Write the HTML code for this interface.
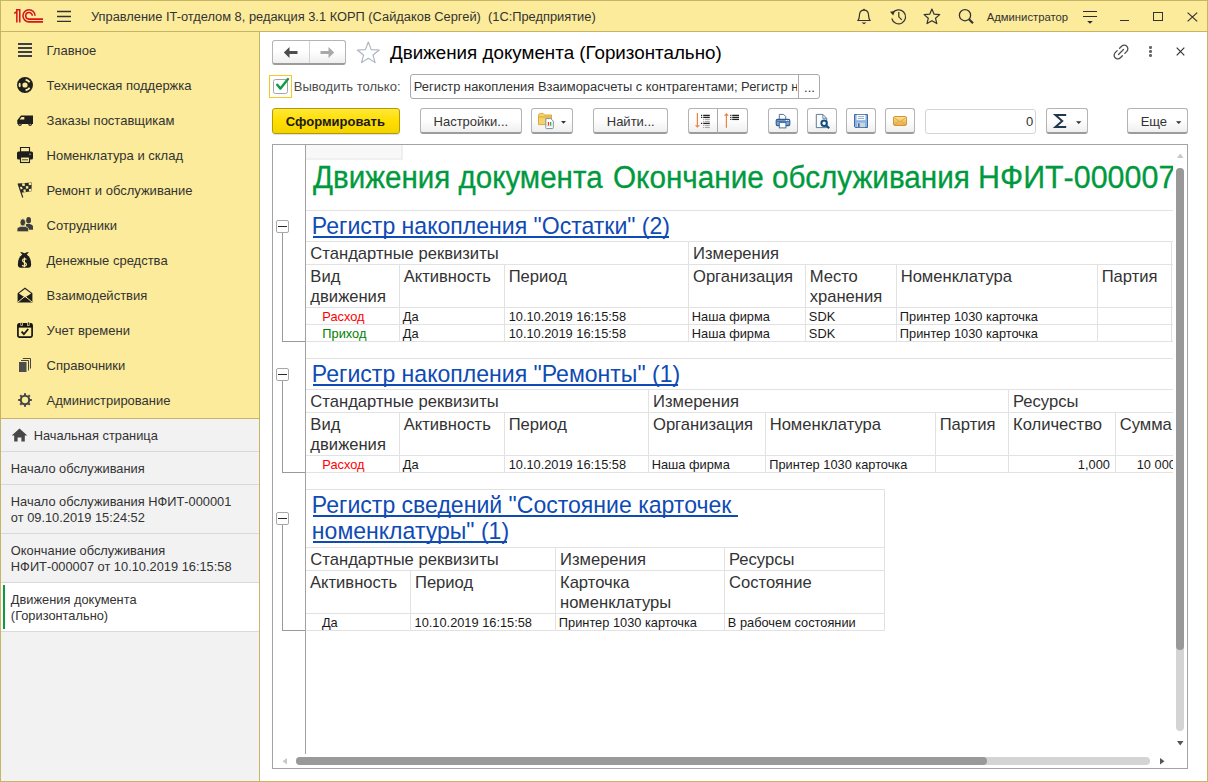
<!DOCTYPE html><html><head><meta charset="utf-8"><style>
html,body{margin:0;padding:0;width:1208px;height:782px;overflow:hidden;background:#fff}
.t{position:absolute;white-space:pre;font-family:"Liberation Sans", sans-serif}
svg{overflow:visible}
</style></head><body><div style="position:absolute;left:0px;top:0px;width:1208px;height:782px;background:#fff"></div>
<div style="position:absolute;left:0px;top:0px;width:1208px;height:32px;background:#fbeb9a"></div>
<div style="position:absolute;left:0px;top:0px;width:1208px;height:1px;background:#c5b565"></div>
<div style="position:absolute;left:0px;top:31px;width:1208px;height:1px;background:#c5b565"></div>
<div style="position:absolute;left:0px;top:0px;width:1px;height:782px;background:#c5b565"></div>
<div style="position:absolute;left:1207px;top:0px;width:1px;height:782px;background:#c5b565"></div>
<div style="position:absolute;left:0px;top:781px;width:1208px;height:1px;background:#c5b565"></div>
<svg style="position:absolute;left:13px;top:8px;" width="32" height="16" viewBox="0 0 32 16"><g fill="none" stroke="#d8141b" stroke-width="1.55">
<path d="M1.2 5.4 L3.85 3.6 M3.85 14.6 V1.8 H6.75 V14.6"/>
<path d="M22.05 7.8 A6.05 6.05 0 1 0 16 13.85 H30"/>
<path d="M19.3 7.8 A3.3 3.3 0 1 0 16 11.1 H30"/>
</g></svg>
<svg style="position:absolute;left:56px;top:10px;" width="16" height="13" viewBox="0 0 16 13"><g stroke="#333" stroke-width="1.3"><path d="M1 1.5H15M1 6.5H15M1 11.4H15"/></g></svg>
<div class="t" style="left:90.96px;top:11px;font-size:12.85px;line-height:12.85px;color:#333;font-weight:normal;">Управление IT-отделом 8, редакция 3.1 КОРП (Сайдаков Сергей)  (1С:Предприятие)</div>
<svg style="position:absolute;left:855px;top:8px;" width="18" height="17" viewBox="0 0 18 17"><g fill="none" stroke="#333" stroke-width="1.2"><path d="M3 12.5 C4.5 10.5 4.3 8.5 4.5 6.5 C4.8 3.6 6.5 2.2 9 2.2 C11.5 2.2 13.2 3.6 13.5 6.5 C13.7 8.5 13.5 10.5 15 12.5 Z"/></g>
<circle cx="9" cy="1.6" r="0.9" fill="#333"/><path d="M6.5 14.5 H11.5 L9 16.2Z" fill="#333"/></svg>
<svg style="position:absolute;left:889px;top:8px;" width="19" height="17" viewBox="0 0 19 17"><g fill="none" stroke="#333" stroke-width="1.2"><path d="M3.6 5.2 A7 7 0 1 1 2.8 10.5"/><path d="M9.8 4 V8.8 L12.8 11.8"/></g>
<path d="M1 3.8 L5.8 3 L4.2 7.4Z" fill="#333"/></svg>
<svg style="position:absolute;left:923px;top:8px;" width="18" height="17" viewBox="0 0 18 17"><path d="M8.9 1 L11.1 6.2 L16.7 6.6 L12.5 10.2 L13.8 15.6 L8.9 12.7 L4 15.6 L5.3 10.2 L1.1 6.6 L6.7 6.2Z" fill="none" stroke="#333" stroke-width="1.2" stroke-linejoin="round"/></svg>
<svg style="position:absolute;left:958px;top:8px;" width="17" height="17" viewBox="0 0 17 17"><circle cx="7" cy="7.2" r="5.6" fill="none" stroke="#333" stroke-width="1.3"/><path d="M11 11.2 L15 15.2" stroke="#333" stroke-width="2.2"/></svg>
<div class="t" style="left:986.63px;top:12px;font-size:11.3px;line-height:11.3px;color:#333;font-weight:normal;">Администратор</div>
<svg style="position:absolute;left:1082px;top:10px;" width="16" height="15" viewBox="0 0 16 15"><g stroke="#2b2b30" stroke-width="1.2"><path d="M1 1.5H15M1 6.5H15"/></g><path d="M5.2 11H10.8L8 13.8Z" fill="#2b2b30"/></svg>
<div style="position:absolute;left:1120px;top:20px;width:9px;height:1px;background:#333"></div>
<div style="position:absolute;left:1153px;top:12px;width:10px;height:9px;border:1.2px solid #333;box-sizing:border-box"></div>
<svg style="position:absolute;left:1187px;top:12px;" width="11" height="10" viewBox="0 0 11 10"><path d="M0.6 0.6L10.2 9.4M10.2 0.6L0.6 9.4" stroke="#333" stroke-width="1.2"/></svg>
<div style="position:absolute;left:1px;top:32px;width:258px;height:386px;background:#fbeb9a"></div>
<div style="position:absolute;left:259px;top:32px;width:1px;height:749px;background:#c5b565"></div>
<div style="position:absolute;left:1px;top:418px;width:258px;height:1px;background:#c5b565"></div>
<div style="position:absolute;left:1px;top:419px;width:258px;height:362px;background:#f2f2f2"></div>
<div class="t" style="left:46.55px;top:44px;font-size:13px;line-height:13px;color:#333;font-weight:normal;">Главное</div>
<div class="t" style="left:46.55px;top:79px;font-size:13px;line-height:13px;color:#333;font-weight:normal;">Техническая поддержка</div>
<div class="t" style="left:46.55px;top:114px;font-size:13px;line-height:13px;color:#333;font-weight:normal;">Заказы поставщикам</div>
<div class="t" style="left:46.55px;top:149px;font-size:13px;line-height:13px;color:#333;font-weight:normal;">Номенклатура и склад</div>
<div class="t" style="left:46.55px;top:184px;font-size:13px;line-height:13px;color:#333;font-weight:normal;">Ремонт и обслуживание</div>
<div class="t" style="left:46.55px;top:219px;font-size:13px;line-height:13px;color:#333;font-weight:normal;">Сотрудники</div>
<div class="t" style="left:46.55px;top:254px;font-size:13px;line-height:13px;color:#333;font-weight:normal;">Денежные средства</div>
<div class="t" style="left:46.55px;top:289px;font-size:13px;line-height:13px;color:#333;font-weight:normal;">Взаимодействия</div>
<div class="t" style="left:46.55px;top:324px;font-size:13px;line-height:13px;color:#333;font-weight:normal;">Учет времени</div>
<div class="t" style="left:46.55px;top:359px;font-size:13px;line-height:13px;color:#333;font-weight:normal;">Справочники</div>
<div class="t" style="left:46.55px;top:394px;font-size:13px;line-height:13px;color:#333;font-weight:normal;">Администрирование</div>
<!--SIDEBAR_ICONS-->
<div style="position:absolute;left:1px;top:451px;width:258px;height:1px;background:#d9d9d9"></div>
<div style="position:absolute;left:1px;top:484px;width:258px;height:1px;background:#d9d9d9"></div>
<div style="position:absolute;left:1px;top:533px;width:258px;height:1px;background:#d9d9d9"></div>
<div style="position:absolute;left:1px;top:582px;width:258px;height:1px;background:#d9d9d9"></div>
<div style="position:absolute;left:1px;top:583px;width:258px;height:48px;background:#fff"></div>
<div style="position:absolute;left:1px;top:631px;width:258px;height:1px;background:#d9d9d9"></div>
<div style="position:absolute;left:3px;top:585px;width:2px;height:44px;background:#0e9a3e"></div>
<div class="t" style="left:33.66px;top:430px;font-size:12.83px;line-height:12.83px;color:#333;font-weight:normal;">Начальная страница</div>
<svg style="position:absolute;left:12px;top:428px;" width="16" height="14" viewBox="0 0 16 14"><path d="M7.5 0.6 L15.3 7.6 H12.8 V13.4 H9.4 V9.4 H5.6 V13.4 H2.2 V7.6 H-0.3Z" fill="#474747"/></svg>
<div class="t" style="left:10.86px;top:463px;font-size:12.83px;line-height:12.83px;color:#333;font-weight:normal;">Начало обслуживания</div>
<div class="t" style="left:10.86px;top:496px;font-size:12.83px;line-height:12.83px;color:#333;font-weight:normal;">Начало обслуживания НФИТ-000001</div>
<div class="t" style="left:10.86px;top:512px;font-size:12.83px;line-height:12.83px;color:#333;font-weight:normal;">от 09.10.2019 15:24:52</div>
<div class="t" style="left:10.86px;top:545px;font-size:12.83px;line-height:12.83px;color:#333;font-weight:normal;">Окончание обслуживания</div>
<div class="t" style="left:10.86px;top:561px;font-size:12.83px;line-height:12.83px;color:#333;font-weight:normal;">НФИТ-000007 от 10.10.2019 16:15:58</div>
<div class="t" style="left:10.86px;top:594px;font-size:12.83px;line-height:12.83px;color:#333;font-weight:normal;">Движения документа</div>
<div class="t" style="left:10.86px;top:610px;font-size:12.83px;line-height:12.83px;color:#333;font-weight:normal;">(Горизонтально)</div>
<!--FORM-->
<!--REPORT-->
<svg style="position:absolute;left:18px;top:43px;" width="14" height="14" viewBox="0 0 14 14"><g stroke="#3a3f4a" stroke-width="2"><path d="M0 1H14M0 5H14M0 9H14M0 13H14"/></g></svg>
<svg style="position:absolute;left:17px;top:77px;" width="16" height="16" viewBox="0 0 16 16"><circle cx="8" cy="8" r="5.3" fill="none" stroke="#1e1e1e" stroke-width="5.4"/>
<g stroke="#fbeb9a" stroke-width="1.9" fill="none"><path d="M8.6 2.7 A5.3 5.3 0 0 1 12.6 5.3"/><path d="M12.6 10.7 A5.3 5.3 0 0 1 8.6 13.3"/><path d="M2.9 9.9 A5.3 5.3 0 0 1 2.9 6.1"/></g></svg>
<svg style="position:absolute;left:17px;top:115px;" width="16" height="11" viewBox="0 0 16 11"><path d="M4.2 0.4 H16 V9 H0.8 C0.5 9 0.3 8.7 0.3 8.4 V5.3 L3.8 0.8Z" fill="#1e1e1e"/><path d="M4.5 2 H7.3 V4.5 H2.7Z" fill="#fbeb9a"/>
<circle cx="2.9" cy="9.3" r="1.7" fill="#1e1e1e"/><circle cx="13.1" cy="9.3" r="1.7" fill="#1e1e1e"/><circle cx="2.9" cy="9.3" r="0.6" fill="#fbeb9a"/><circle cx="13.1" cy="9.3" r="0.6" fill="#fbeb9a"/></svg>
<svg style="position:absolute;left:17px;top:147px;" width="16" height="16" viewBox="0 0 16 16"><path d="M3.5 0.5 H12.5 V5 H3.5Z" fill="none" stroke="#1e1e1e" stroke-width="1.1"/>
<rect x="0" y="4.5" width="16" height="8" rx="1.5" fill="#1e1e1e"/><rect x="12.2" y="6.5" width="1.6" height="1.6" fill="#8a8460"/>
<rect x="3.5" y="10" width="9" height="5.5" fill="#fbeb9a" stroke="#1e1e1e" stroke-width="1.1"/><path d="M5 12.8 H11" stroke="#1e1e1e" stroke-width="0.8"/></svg>
<svg style="position:absolute;left:17px;top:182px;" width="16" height="16" viewBox="0 0 16 16"><path d="M1.10 1.60 L14.80 0.40 L14.40 9.30 L4.00 10.80 Z" fill="#2b2b2b"/><path d="M4.93 1.57 L7.65 1.33 L8.01 3.75 L5.47 4.01 Z M11.73 0.97 L14.45 0.73 L14.36 3.10 L11.82 3.36 Z M2.48 4.94 L4.97 4.68 L5.55 7.11 L3.23 7.39 Z M8.72 4.29 L11.22 4.02 L11.35 6.42 L9.03 6.70 Z M6.26 7.65 L8.54 7.37 L8.90 9.79 L6.79 10.08 Z M11.96 6.95 L14.24 6.67 L14.15 9.04 L12.05 9.34 Z " fill="#fbeb9a"/><path d="M1.1 1.6 L5.8 15.5" stroke="#2b2b2b" stroke-width="1.2"/></svg>
<svg style="position:absolute;left:17px;top:217px;" width="16" height="15" viewBox="0 0 16 15"><g fill="#3d3d3d"><ellipse cx="11.6" cy="3.3" rx="2.4" ry="3.2"/><path d="M9 7.3 C10.3 7 12.9 7 14.2 7.5 C15.5 8 16 8.8 16 9.8 V12.8 H9Z"/></g><path d="M1.4 10.2 C2.5 9.5 4 9.2 5.8 9.2 C7.6 9.2 9.1 9.5 10.2 10.2 C11.2 10.8 11.6 11.4 11.6 12.2 V14.8 H0 V12.2 C0 11.4 0.4 10.8 1.4 10.2Z" fill="#3d3d3d" stroke="#fbeb9a" stroke-width="0.8"/><ellipse cx="5.8" cy="5.4" rx="2.8" ry="3.6" fill="#3d3d3d" stroke="#fbeb9a" stroke-width="0.8"/></svg>
<svg style="position:absolute;left:17px;top:251px;" width="15" height="17" viewBox="0 0 15 17"><path d="M3.2 1 C4.8 0.6 6.5 2 7.5 2.3 C8.5 2 10.2 0.6 11.8 1 L9.6 3.9 H5.4Z" fill="#1e1e1e"/>
<path d="M5.4 3.6 C2.2 5.8 0.9 9 0.9 13.2 C0.9 15.9 1.9 16.7 3.6 16.7 H11.4 C13.1 16.7 14.1 15.9 14.1 13.2 C14.1 9 12.8 5.8 9.6 3.6Z" fill="#1e1e1e"/>
<path d="M9.3 8.6 C8.8 7.5 5.6 7.4 5.6 9.5 C5.6 11.5 9.4 11.1 9.4 13.4 C9.4 15.5 6 15.4 5.3 14.2" fill="none" stroke="#fbeb9a" stroke-width="1.3"/><path d="M7.45 6.6 V16.2" stroke="#fbeb9a" stroke-width="1.1"/></svg>
<svg style="position:absolute;left:17px;top:287px;" width="16" height="16" viewBox="0 0 16 16"><path d="M0.6 6.3 L8 0.6 L15.4 6.3 V15.4 H0.6Z" fill="#1e1e1e"/><path d="M1.9 6.5 L8 1.9 L14.1 6.5 L8 10.4Z" fill="#fbeb9a"/><path d="M0.9 15.1 L8 9.3 L15.1 15.1" fill="none" stroke="#fbeb9a" stroke-width="1"/></svg>
<svg style="position:absolute;left:17px;top:322px;" width="16" height="16" viewBox="0 0 16 16"><rect x="0.9" y="1.8" width="14.2" height="13.4" rx="1.6" fill="none" stroke="#151515" stroke-width="1.7"/><rect x="0.9" y="1.8" width="14.2" height="3.8" fill="#151515"/><rect x="3.8" y="0" width="1.6" height="3.4" fill="#151515" stroke="#fbeb9a" stroke-width="0.7"/><rect x="10.6" y="0" width="1.6" height="3.4" fill="#151515" stroke="#fbeb9a" stroke-width="0.7"/><path d="M4.6 9.6 L6.9 12.2 L11.2 7" fill="none" stroke="#151515" stroke-width="1.8"/></svg>
<svg style="position:absolute;left:19px;top:358px;" width="12" height="14" viewBox="0 0 12 14"><g fill="none" stroke="#444" stroke-width="1"><path d="M3.8 0.5 H11.5 V10.5"/><path d="M2 2.5 H9.5 V12.5"/></g><rect x="0" y="4" width="7.5" height="10" fill="#4d4d4d"/></svg>
<svg style="position:absolute;left:18px;top:393px;" width="14" height="14" viewBox="0 0 14 14"><circle cx="7" cy="7" r="4.2" fill="none" stroke="#464646" stroke-width="2.1"/>
<g stroke="#464646" stroke-width="2"><path d="M7 0.2V2.6M7 11.4V13.8M0.2 7H2.6M11.4 7H13.8M2.2 2.2L3.9 3.9M10.1 10.1L11.8 11.8M11.8 2.2L10.1 3.9M3.9 10.1L2.2 11.8"/></g></svg>
<div style="position:absolute;left:272px;top:40px;width:74px;height:25px;box-sizing:border-box;border:1px solid #b4b4b4;border-bottom:2px solid #9c9c9c;border-radius:3px;background:linear-gradient(#ffffff 0%,#ffffff 45%,#efefef 100%);"></div>
<div style="position:absolute;left:309px;top:41px;width:1px;height:22px;background:#d2d2d2"></div>
<svg style="position:absolute;left:283px;top:46px;" width="16" height="13" viewBox="0 0 16 13"><path d="M0.8 6.5 L6.5 1 V4.9 H14.5 V8.1 H6.5 V12Z" fill="#4d4d4d"/></svg>
<svg style="position:absolute;left:319px;top:46px;" width="16" height="13" viewBox="0 0 16 13"><path d="M15.2 6.5 L9.5 1 V4.9 H1.5 V8.1 H9.5 V12Z" fill="#a8a8a8"/></svg>
<svg style="position:absolute;left:356px;top:41px;" width="25" height="23" viewBox="0 0 25 23"><path d="M12.3 1 L15.2 8.6 L23.3 9 L17 14 L19.1 21.6 L12.3 17.3 L5.5 21.6 L7.6 14 L1.3 9 L9.4 8.6Z" fill="none" stroke="#a9b3bf" stroke-width="1.1" stroke-linejoin="round"/></svg>
<div class="t" style="left:390.06px;top:44px;font-size:18.8px;line-height:18.8px;color:#000;font-weight:normal;">Движения документа (Горизонтально)</div>
<svg style="position:absolute;left:1112px;top:43px;" width="18" height="17" viewBox="0 0 18 17"><g fill="none" stroke="#4d4d4d" stroke-width="1.3" stroke-linecap="round">
<path d="M7.6 5.2 L9.6 3.2 C11 1.8 13.4 1.8 14.8 3.2 C16.2 4.6 16.2 7 14.8 8.4 L12.8 10.4"/>
<path d="M5.2 7.6 L3.2 9.6 C1.8 11 1.8 13.4 3.2 14.8 C4.6 16.2 7 16.2 8.4 14.8 L10.4 12.8"/>
<path d="M6.5 11.5 L11.5 6.5"/></g></svg>
<div style="position:absolute;left:1149.2px;top:46.2px;width:2.6px;height:2.6px;border-radius:50%;background:#666"></div>
<div style="position:absolute;left:1149.2px;top:50.2px;width:2.6px;height:2.6px;border-radius:50%;background:#666"></div>
<div style="position:absolute;left:1149.2px;top:54.2px;width:2.6px;height:2.6px;border-radius:50%;background:#666"></div>
<svg style="position:absolute;left:1176px;top:47px;" width="9" height="9" viewBox="0 0 9 9"><path d="M0.7 0.7L8.3 8.3M8.3 0.7L0.7 8.3" stroke="#333" stroke-width="1.2"/></svg>
<div style="position:absolute;left:269px;top:75px;width:23px;height:23px;box-sizing:border-box;border:1px solid #f7c820"></div>
<div style="position:absolute;left:273px;top:79px;width:15px;height:15px;box-sizing:border-box;border:1px solid #a4a4a4;border-radius:2.5px;background:#fff"></div>
<svg style="position:absolute;left:274px;top:77px;" width="16" height="14" viewBox="0 0 16 14"><path d="M3.2 7.8 L6.5 11.6 L14 2.1" fill="none" stroke="#0f9a44" stroke-width="2.4" stroke-linecap="round" stroke-linejoin="round"/></svg>
<div class="t" style="left:293.85px;top:80px;font-size:13px;line-height:13px;color:#4d4d4d;font-weight:normal;">Выводить только:</div>
<div style="position:absolute;left:410px;top:74px;width:410px;height:25px;box-sizing:border-box;border:1px solid #aaa;border-radius:3px;background:#fff"></div>
<div style="position:absolute;left:798px;top:75px;width:1px;height:23px;background:#aaa"></div>
<div style="position:absolute;left:411px;top:75px;width:386px;height:23px;overflow:hidden">
<div class="t" style="left:2.75px;top:6px;font-size:12.92px;line-height:12.92px;color:#333;font-weight:normal;">Регистр накопления Взаиморасчеты с контрагентами; Регистр накопления</div>
</div>
<div class="t" style="left:804.10px;top:81px;font-size:13px;line-height:13px;color:#333;font-weight:normal;">...</div>
<div style="position:absolute;left:272px;top:108px;width:128px;height:26px;box-sizing:border-box;border:1px solid #b39a00;border-radius:3px;background:linear-gradient(#ffe83a,#ffde00 50%,#f3d300);box-shadow:0 1px 1px rgba(120,120,160,0.25)"></div>
<div class="t" style="left:285.85px;top:115px;font-size:13px;line-height:13px;color:#1a1a1a;font-weight:bold;">Сформировать</div>
<div style="position:absolute;left:420px;top:108px;width:102px;height:26px;box-sizing:border-box;border:1px solid #b4b4b4;border-bottom:2px solid #9c9c9c;border-radius:3px;background:linear-gradient(#ffffff 0%,#ffffff 45%,#efefef 100%);"></div>
<div class="t" style="left:433.55px;top:115px;font-size:13px;line-height:13px;color:#333;font-weight:normal;">Настройки...</div>
<div style="position:absolute;left:531px;top:108px;width:42px;height:26px;box-sizing:border-box;border:1px solid #b4b4b4;border-bottom:2px solid #9c9c9c;border-radius:3px;background:linear-gradient(#ffffff 0%,#ffffff 45%,#efefef 100%);"></div>
<svg style="position:absolute;left:537px;top:112px;" width="18" height="18" viewBox="0 0 18 18"><path d="M1.5 4.2 C1.5 2.2 2.3 1.4 3.8 1.4 H5.8 C6.8 1.4 7.2 3 8 3 H14.5 V12.6 H1.5Z" fill="#f4d468" stroke="#d9a234" stroke-width="0.9"/><path d="M1.5 5 H14.5" stroke="#d9a234" stroke-width="0.9"/>
<path d="M8.8 6.6 H13.8 L16.3 9.1 V15.8 C16.3 16.3 16 16.6 15.5 16.6 H9.6 C9.1 16.6 8.8 16.3 8.8 15.8Z" fill="#fff" stroke="#7d90a0" stroke-width="1"/>
<rect x="10.8" y="10" width="1.3" height="3.6" fill="#f03030"/><rect x="13" y="10" width="1.3" height="3.6" fill="#30b040"/><path d="M10.3 13.9 H14.8" stroke="#9aa" stroke-width="0.5"/></svg>
<svg style="position:absolute;left:561px;top:121px;" width="5" height="3" viewBox="0 0 5 3"><path d="M0 0H5L2.5 2.8Z" fill="#333"/></svg>
<div style="position:absolute;left:593px;top:108px;width:75px;height:26px;box-sizing:border-box;border:1px solid #b4b4b4;border-bottom:2px solid #9c9c9c;border-radius:3px;background:linear-gradient(#ffffff 0%,#ffffff 45%,#efefef 100%);"></div>
<div class="t" style="left:606.75px;top:115px;font-size:13px;line-height:13px;color:#333;font-weight:normal;">Найти...</div>
<div style="position:absolute;left:688px;top:108px;width:60px;height:26px;box-sizing:border-box;border:1px solid #b4b4b4;border-bottom:2px solid #9c9c9c;border-radius:3px;background:linear-gradient(#ffffff 0%,#ffffff 45%,#efefef 100%);"></div>
<div style="position:absolute;left:717px;top:109px;width:1px;height:24px;background:#a9a9a9"></div>
<svg style="position:absolute;left:694px;top:112px;" width="18" height="18" viewBox="0 0 18 18"><path d="M3.4 1 V13.8" stroke="#f08040" stroke-width="1.2"/><path d="M0.9 13.2 H5.9 L3.4 15.8Z" fill="#f08040"/><rect x="7" y="2.8" width="1.2" height="1.2" fill="#222"/><rect x="9.2" y="2.75" width="6.600000000000001" height="1.3" fill="#222"/><rect x="7" y="4.800000000000001" width="1.2" height="1.2" fill="#222"/><rect x="9.2" y="4.75" width="6.600000000000001" height="1.3" fill="#222"/><rect x="7" y="10.8" width="1.2" height="1.2" fill="#222"/><rect x="9.2" y="10.75" width="6.600000000000001" height="1.3" fill="#222"/><rect x="9.2" y="6.9" width="1" height="1" fill="#999"/><rect x="11" y="6.8500000000000005" width="4.800000000000001" height="1.1" fill="#aaa"/><rect x="9.2" y="8.9" width="1" height="1" fill="#999"/><rect x="11" y="8.85" width="4.800000000000001" height="1.1" fill="#aaa"/><rect x="9.2" y="13.0" width="1" height="1" fill="#999"/><rect x="11" y="12.95" width="4.800000000000001" height="1.1" fill="#aaa"/><rect x="9.2" y="15.0" width="1" height="1" fill="#999"/><rect x="11" y="14.95" width="4.800000000000001" height="1.1" fill="#aaa"/></svg>
<svg style="position:absolute;left:723px;top:112px;" width="18" height="18" viewBox="0 0 18 18"><path d="M3.4 3 V15.7" stroke="#f08040" stroke-width="1.2"/><path d="M0.9 3.8 H5.9 L3.4 0.9Z" fill="#f08040"/><rect x="7.2" y="2.8" width="1.2" height="1.2" fill="#222"/><rect x="9.2" y="2.75" width="6.800000000000001" height="1.3" fill="#222"/><rect x="7.2" y="4.800000000000001" width="1.2" height="1.2" fill="#222"/><rect x="9.2" y="4.75" width="6.800000000000001" height="1.3" fill="#222"/><rect x="7.2" y="6.800000000000001" width="1.2" height="1.2" fill="#222"/><rect x="9.2" y="6.75" width="6.800000000000001" height="1.3" fill="#222"/></svg>
<div style="position:absolute;left:768px;top:108px;width:30px;height:26px;box-sizing:border-box;border:1px solid #b4b4b4;border-bottom:2px solid #9c9c9c;border-radius:3px;background:linear-gradient(#ffffff 0%,#ffffff 45%,#efefef 100%);"></div>
<svg style="position:absolute;left:775px;top:113px;" width="16" height="16" viewBox="0 0 16 16"><path d="M4.3 1.4 H8.6 L10.7 3.5 V6.5 H4.3Z" fill="#fff" stroke="#3b6694" stroke-width="0.9"/>
<rect x="1.2" y="6.4" width="13.6" height="6.2" rx="1.3" fill="#7ea4d2" stroke="#2f5c8c" stroke-width="1.1"/><path d="M2 8.3 H14" stroke="#2f5c8c" stroke-width="0.8"/><rect x="10.8" y="7" width="1.2" height="1" fill="#fff"/><rect x="12.6" y="7" width="1.2" height="1" fill="#fff"/>
<rect x="4.3" y="9.6" width="6.6" height="5.3" fill="#fff" stroke="#3b6694" stroke-width="0.9"/></svg>
<div style="position:absolute;left:807px;top:108px;width:30px;height:26px;box-sizing:border-box;border:1px solid #b4b4b4;border-bottom:2px solid #9c9c9c;border-radius:3px;background:linear-gradient(#ffffff 0%,#ffffff 45%,#efefef 100%);"></div>
<svg style="position:absolute;left:815px;top:113px;" width="16" height="16" viewBox="0 0 16 16"><path d="M1.3 1.4 H7.8 L11.7 5.3 V14.6 H1.3Z" fill="#fbfbfb" stroke="#4f6d8c" stroke-width="0.9"/><path d="M7.8 1.4 V5.3 H11.7" fill="none" stroke="#4f6d8c" stroke-width="0.8"/>
<circle cx="9.1" cy="10.3" r="2.7" fill="#fff" stroke="#0f4f80" stroke-width="2"/><path d="M11 12.3 L14.2 15.3" stroke="#0f4f80" stroke-width="2.2"/></svg>
<div style="position:absolute;left:846px;top:108px;width:30px;height:26px;box-sizing:border-box;border:1px solid #b4b4b4;border-bottom:2px solid #9c9c9c;border-radius:3px;background:linear-gradient(#ffffff 0%,#ffffff 45%,#efefef 100%);"></div>
<svg style="position:absolute;left:853px;top:113px;" width="16" height="16" viewBox="0 0 16 16"><path d="M1.5 1.5 H14.5 V14.5 H2.3 L1.5 13.7Z" fill="#8cb2e2" stroke="#3d6aa5" stroke-width="1"/><rect x="3.6" y="1.8" width="8.8" height="5.4" fill="#fff"/>
<path d="M5 3.6H11M5 5.5H11" stroke="#7a9cc8" stroke-width="0.8"/><rect x="4" y="9.6" width="8" height="4.6" fill="#ccd6d8"/><rect x="5" y="10.3" width="1.6" height="3.9" fill="#3d6aa5"/></svg>
<div style="position:absolute;left:885px;top:108px;width:30px;height:26px;box-sizing:border-box;border:1px solid #b4b4b4;border-bottom:2px solid #9c9c9c;border-radius:3px;background:linear-gradient(#ffffff 0%,#ffffff 45%,#efefef 100%);"></div>
<div style="position:absolute;left:893px;top:116px;width:14px;height:10px;box-sizing:border-box;border:1px solid #d39532;border-radius:2px;background:linear-gradient(#fae39a,#f0c060 60%,#e8b050)"></div>
<svg style="position:absolute;left:893px;top:116px;" width="14" height="10" viewBox="0 0 14 10"><path d="M1.5 1.8 L7 6 L12.5 1.8 M1.5 9 L5.3 5.6 M12.5 9 L8.7 5.6" fill="none" stroke="#d9a040" stroke-width="0.8"/></svg>
<div style="position:absolute;left:925px;top:109px;width:111px;height:25px;box-sizing:border-box;border:1px solid #d4d4d4;border-radius:3px;background:#fff"></div>
<div class="t" style="left:1025.95px;top:115px;font-size:13px;line-height:13px;color:#333;font-weight:normal;">0</div>
<div style="position:absolute;left:1046px;top:108px;width:42px;height:26px;box-sizing:border-box;border:1px solid #b4b4b4;border-bottom:2px solid #9c9c9c;border-radius:3px;background:linear-gradient(#ffffff 0%,#ffffff 45%,#efefef 100%);"></div>
<svg style="position:absolute;left:1054px;top:113px;" width="13" height="16" viewBox="0 0 13 16"><path d="M12.2 1.9 H1.4 L8.2 8 L1.4 14.1 H12.2" fill="none" stroke="#1f3a4f" stroke-width="2" stroke-linejoin="miter"/></svg>
<svg style="position:absolute;left:1076px;top:121px;" width="6" height="4" viewBox="0 0 6 4"><path d="M0 0.2H5.4L2.7 3Z" fill="#333"/></svg>
<div style="position:absolute;left:1127px;top:108px;width:61px;height:26px;box-sizing:border-box;border:1px solid #b4b4b4;border-bottom:2px solid #9c9c9c;border-radius:3px;background:linear-gradient(#ffffff 0%,#ffffff 45%,#efefef 100%);"></div>
<div class="t" style="left:1140.65px;top:115px;font-size:13px;line-height:13px;color:#333;font-weight:normal;">Еще</div>
<svg style="position:absolute;left:1176px;top:121px;" width="6" height="4" viewBox="0 0 6 4"><path d="M0 0.2H5.4L2.7 3Z" fill="#333"/></svg>
<div style="position:absolute;left:272px;top:144px;width:916px;height:625px;box-sizing:border-box;border:1px solid #a3a3a3;background:#fff"></div>
<div style="position:absolute;left:305px;top:145px;width:1px;height:609px;background:#a3a3a3"></div>
<div style="position:absolute;left:306px;top:145px;width:95px;height:13px;background:#f8f8f8"></div>
<div style="position:absolute;left:306px;top:158px;width:97px;height:2px;background:#f0f0f0"></div>
<div style="position:absolute;left:401px;top:145px;width:2px;height:15px;background:#f0f0f0"></div>
<div style="position:absolute;left:306px;top:145px;width:867px;height:608px;overflow:hidden">
<div class="t" style="left:6.60px;top:17px;font-size:30.6px;line-height:30.6px;color:#009a3e;font-weight:normal;transform:scaleX(0.966);transform-origin:0 0;-webkit-text-stroke:0.3px #009a3e">Движения документа</div>
<div class="t" style="left:306.60px;top:17px;font-size:30.6px;line-height:30.6px;color:#009a3e;font-weight:normal;transform:scaleX(0.97);transform-origin:0 0;-webkit-text-stroke:0.3px #009a3e">Окончание обслуживания</div>
<div class="t" style="left:671.50px;top:17px;font-size:30.6px;line-height:30.6px;color:#009a3e;font-weight:normal;transform:scaleX(0.995);transform-origin:0 0;-webkit-text-stroke:0.3px #009a3e">НФИТ-000007</div>
<div style="position:absolute;left:0px;top:65px;width:867px;height:1px;background:#e2e2e2"></div>
<div class="t" style="left:5.85px;top:70px;font-size:23.05px;line-height:23.05px;color:#0f4bb4;font-weight:normal;">Регистр накопления &quot;Остатки&quot; (2)</div>
<div style="position:absolute;left:7px;top:90.9px;width:356px;height:1.9px;background:#0f4bb4"></div>
<div style="position:absolute;left:0px;top:96px;width:867px;height:1px;background:#e2e2e2"></div>
<div style="position:absolute;left:0px;top:119px;width:867px;height:1px;background:#e2e2e2"></div>
<div style="position:absolute;left:0px;top:162px;width:867px;height:1px;background:#e2e2e2"></div>
<div style="position:absolute;left:0px;top:179px;width:867px;height:1px;background:#e2e2e2"></div>
<div style="position:absolute;left:0px;top:196px;width:867px;height:1px;background:#e2e2e2"></div>
<div style="position:absolute;left:382px;top:96px;width:1px;height:101px;background:#e2e2e2"></div>
<div style="position:absolute;left:865px;top:96px;width:1px;height:101px;background:#e2e2e2"></div>
<div style="position:absolute;left:93px;top:119px;width:1px;height:78px;background:#e2e2e2"></div>
<div style="position:absolute;left:198px;top:119px;width:1px;height:78px;background:#e2e2e2"></div>
<div style="position:absolute;left:499px;top:119px;width:1px;height:78px;background:#e2e2e2"></div>
<div style="position:absolute;left:590px;top:119px;width:1px;height:78px;background:#e2e2e2"></div>
<div style="position:absolute;left:791px;top:119px;width:1px;height:78px;background:#e2e2e2"></div>
<div class="t" style="left:4.37px;top:101px;font-size:16.6px;line-height:16.6px;color:#333;font-weight:normal;">Стандартные реквизиты</div>
<div class="t" style="left:386.97px;top:101px;font-size:16.6px;line-height:16.6px;color:#333;font-weight:normal;">Измерения</div>
<div class="t" style="left:4.37px;top:124px;font-size:16.6px;line-height:16.6px;color:#333;font-weight:normal;">Вид</div>
<div class="t" style="left:4.37px;top:144px;font-size:16.6px;line-height:16.6px;color:#333;font-weight:normal;">движения</div>
<div class="t" style="left:97.67px;top:124px;font-size:16.6px;line-height:16.6px;color:#333;font-weight:normal;">Активность</div>
<div class="t" style="left:202.67px;top:124px;font-size:16.6px;line-height:16.6px;color:#333;font-weight:normal;">Период</div>
<div class="t" style="left:386.97px;top:124px;font-size:16.6px;line-height:16.6px;color:#333;font-weight:normal;">Организация</div>
<div class="t" style="left:503.67px;top:124px;font-size:16.6px;line-height:16.6px;color:#333;font-weight:normal;">Место</div>
<div class="t" style="left:503.67px;top:144px;font-size:16.6px;line-height:16.6px;color:#333;font-weight:normal;">хранения</div>
<div class="t" style="left:594.67px;top:124px;font-size:16.6px;line-height:16.6px;color:#333;font-weight:normal;">Номенклатура</div>
<div class="t" style="left:795.67px;top:124px;font-size:16.6px;line-height:16.6px;color:#333;font-weight:normal;">Партия</div>
<div class="t" style="left:16.36px;top:166px;font-size:12.8px;line-height:12.8px;color:#ff0000;font-weight:normal;">Расход</div>
<div class="t" style="left:96.86px;top:166px;font-size:12.8px;line-height:12.8px;color:#1a1a1a;font-weight:normal;">Да</div>
<div class="t" style="left:202.66px;top:166px;font-size:12.8px;line-height:12.8px;color:#1a1a1a;font-weight:normal;">10.10.2019 16:15:58</div>
<div class="t" style="left:385.86px;top:166px;font-size:12.8px;line-height:12.8px;color:#1a1a1a;font-weight:normal;">Наша фирма</div>
<div class="t" style="left:502.86px;top:166px;font-size:12.8px;line-height:12.8px;color:#1a1a1a;font-weight:normal;">SDK</div>
<div class="t" style="left:593.86px;top:166px;font-size:12.8px;line-height:12.8px;color:#1a1a1a;font-weight:normal;">Принтер 1030 карточка</div>
<div class="t" style="left:16.36px;top:183px;font-size:12.8px;line-height:12.8px;color:#008000;font-weight:normal;">Приход</div>
<div class="t" style="left:96.86px;top:183px;font-size:12.8px;line-height:12.8px;color:#1a1a1a;font-weight:normal;">Да</div>
<div class="t" style="left:202.66px;top:183px;font-size:12.8px;line-height:12.8px;color:#1a1a1a;font-weight:normal;">10.10.2019 16:15:58</div>
<div class="t" style="left:385.86px;top:183px;font-size:12.8px;line-height:12.8px;color:#1a1a1a;font-weight:normal;">Наша фирма</div>
<div class="t" style="left:502.86px;top:183px;font-size:12.8px;line-height:12.8px;color:#1a1a1a;font-weight:normal;">SDK</div>
<div class="t" style="left:593.86px;top:183px;font-size:12.8px;line-height:12.8px;color:#1a1a1a;font-weight:normal;">Принтер 1030 карточка</div>
<div style="position:absolute;left:0px;top:213px;width:867px;height:1px;background:#e2e2e2"></div>
<div class="t" style="left:5.85px;top:218px;font-size:23.05px;line-height:23.05px;color:#0f4bb4;font-weight:normal;">Регистр накопления &quot;Ремонты&quot; (1)</div>
<div style="position:absolute;left:7px;top:238.89999999999998px;width:365px;height:1.9px;background:#0f4bb4"></div>
<div style="position:absolute;left:0px;top:244px;width:867px;height:1px;background:#e2e2e2"></div>
<div style="position:absolute;left:0px;top:267px;width:867px;height:1px;background:#e2e2e2"></div>
<div style="position:absolute;left:0px;top:310px;width:867px;height:1px;background:#e2e2e2"></div>
<div style="position:absolute;left:0px;top:327px;width:867px;height:1px;background:#e2e2e2"></div>
<div style="position:absolute;left:342px;top:244px;width:1px;height:84px;background:#e2e2e2"></div>
<div style="position:absolute;left:702px;top:244px;width:1px;height:84px;background:#e2e2e2"></div>
<div style="position:absolute;left:93px;top:267px;width:1px;height:61px;background:#e2e2e2"></div>
<div style="position:absolute;left:198px;top:267px;width:1px;height:61px;background:#e2e2e2"></div>
<div style="position:absolute;left:459px;top:267px;width:1px;height:61px;background:#e2e2e2"></div>
<div style="position:absolute;left:629px;top:267px;width:1px;height:61px;background:#e2e2e2"></div>
<div style="position:absolute;left:809px;top:267px;width:1px;height:61px;background:#e2e2e2"></div>
<div class="t" style="left:4.37px;top:249px;font-size:16.6px;line-height:16.6px;color:#333;font-weight:normal;">Стандартные реквизиты</div>
<div class="t" style="left:346.97px;top:249px;font-size:16.6px;line-height:16.6px;color:#333;font-weight:normal;">Измерения</div>
<div class="t" style="left:706.97px;top:249px;font-size:16.6px;line-height:16.6px;color:#333;font-weight:normal;">Ресурсы</div>
<div class="t" style="left:4.37px;top:272px;font-size:16.6px;line-height:16.6px;color:#333;font-weight:normal;">Вид</div>
<div class="t" style="left:4.37px;top:292px;font-size:16.6px;line-height:16.6px;color:#333;font-weight:normal;">движения</div>
<div class="t" style="left:97.67px;top:272px;font-size:16.6px;line-height:16.6px;color:#333;font-weight:normal;">Активность</div>
<div class="t" style="left:202.67px;top:272px;font-size:16.6px;line-height:16.6px;color:#333;font-weight:normal;">Период</div>
<div class="t" style="left:346.97px;top:272px;font-size:16.6px;line-height:16.6px;color:#333;font-weight:normal;">Организация</div>
<div class="t" style="left:463.67px;top:272px;font-size:16.6px;line-height:16.6px;color:#333;font-weight:normal;">Номенклатура</div>
<div class="t" style="left:633.67px;top:272px;font-size:16.6px;line-height:16.6px;color:#333;font-weight:normal;">Партия</div>
<div class="t" style="left:706.97px;top:272px;font-size:16.6px;line-height:16.6px;color:#333;font-weight:normal;">Количество</div>
<div class="t" style="left:813.67px;top:272px;font-size:16.6px;line-height:16.6px;color:#333;font-weight:normal;">Сумма</div>
<div class="t" style="left:16.36px;top:314px;font-size:12.8px;line-height:12.8px;color:#ff0000;font-weight:normal;">Расход</div>
<div class="t" style="left:96.86px;top:314px;font-size:12.8px;line-height:12.8px;color:#1a1a1a;font-weight:normal;">Да</div>
<div class="t" style="left:202.66px;top:314px;font-size:12.8px;line-height:12.8px;color:#1a1a1a;font-weight:normal;">10.10.2019 16:15:58</div>
<div class="t" style="left:345.76px;top:314px;font-size:12.8px;line-height:12.8px;color:#1a1a1a;font-weight:normal;">Наша фирма</div>
<div class="t" style="left:463.26px;top:314px;font-size:12.8px;line-height:12.8px;color:#1a1a1a;font-weight:normal;">Принтер 1030 карточка</div>
<div class="t" style="left:771.86px;top:314px;font-size:12.8px;line-height:12.8px;color:#1a1a1a;font-weight:normal;">1,000</div>
<div class="t" style="left:830.76px;top:314px;font-size:12.8px;line-height:12.8px;color:#1a1a1a;font-weight:normal;">10 000</div>
<div style="position:absolute;left:0px;top:344px;width:579px;height:1px;background:#e2e2e2"></div>
<div style="position:absolute;left:578px;top:344px;width:1px;height:142px;background:#e2e2e2"></div>
<div class="t" style="left:5.85px;top:349px;font-size:23.05px;line-height:23.05px;color:#0f4bb4;font-weight:normal;">Регистр сведений &quot;Состояние карточек </div>
<div style="position:absolute;left:7px;top:369.9px;width:425px;height:1.9px;background:#0f4bb4"></div>
<div class="t" style="left:5.85px;top:375px;font-size:23.05px;line-height:23.05px;color:#0f4bb4;font-weight:normal;">номенклатуры&quot; (1)</div>
<div style="position:absolute;left:7px;top:395.9px;width:194px;height:1.9px;background:#0f4bb4"></div>
<div style="position:absolute;left:0px;top:402px;width:579px;height:1px;background:#e2e2e2"></div>
<div style="position:absolute;left:0px;top:425px;width:579px;height:1px;background:#e2e2e2"></div>
<div style="position:absolute;left:0px;top:468px;width:579px;height:1px;background:#e2e2e2"></div>
<div style="position:absolute;left:0px;top:485px;width:579px;height:1px;background:#e2e2e2"></div>
<div style="position:absolute;left:249px;top:402px;width:1px;height:84px;background:#e2e2e2"></div>
<div style="position:absolute;left:418px;top:402px;width:1px;height:84px;background:#e2e2e2"></div>
<div style="position:absolute;left:104px;top:425px;width:1px;height:61px;background:#e2e2e2"></div>
<div class="t" style="left:4.37px;top:407px;font-size:16.6px;line-height:16.6px;color:#333;font-weight:normal;">Стандартные реквизиты</div>
<div class="t" style="left:253.97px;top:407px;font-size:16.6px;line-height:16.6px;color:#333;font-weight:normal;">Измерения</div>
<div class="t" style="left:422.97px;top:407px;font-size:16.6px;line-height:16.6px;color:#333;font-weight:normal;">Ресурсы</div>
<div class="t" style="left:3.97px;top:430px;font-size:16.6px;line-height:16.6px;color:#333;font-weight:normal;">Активность</div>
<div class="t" style="left:108.97px;top:430px;font-size:16.6px;line-height:16.6px;color:#333;font-weight:normal;">Период</div>
<div class="t" style="left:253.97px;top:430px;font-size:16.6px;line-height:16.6px;color:#333;font-weight:normal;">Карточка</div>
<div class="t" style="left:253.97px;top:450px;font-size:16.6px;line-height:16.6px;color:#333;font-weight:normal;">номенклатуры</div>
<div class="t" style="left:422.97px;top:430px;font-size:16.6px;line-height:16.6px;color:#333;font-weight:normal;">Состояние</div>
<div class="t" style="left:15.96px;top:472px;font-size:12.8px;line-height:12.8px;color:#1a1a1a;font-weight:normal;">Да</div>
<div class="t" style="left:108.56px;top:472px;font-size:12.8px;line-height:12.8px;color:#1a1a1a;font-weight:normal;">10.10.2019 16:15:58</div>
<div class="t" style="left:252.86px;top:472px;font-size:12.8px;line-height:12.8px;color:#1a1a1a;font-weight:normal;">Принтер 1030 карточка</div>
<div class="t" style="left:421.86px;top:472px;font-size:12.8px;line-height:12.8px;color:#1a1a1a;font-weight:normal;">В рабочем состоянии</div>
</div>
<div style="position:absolute;left:276px;top:220px;width:13px;height:13px;box-sizing:border-box;border:1px solid #a8a8a8;border-radius:2px;background:#fff"></div>
<div style="position:absolute;left:278px;top:226px;width:9px;height:1px;background:#2a2a2a"></div>
<div style="position:absolute;left:282px;top:233px;width:1px;height:108px;background:#9a9a9a"></div>
<div style="position:absolute;left:282px;top:341px;width:23px;height:1px;background:#9a9a9a"></div>
<div style="position:absolute;left:276px;top:368px;width:13px;height:13px;box-sizing:border-box;border:1px solid #a8a8a8;border-radius:2px;background:#fff"></div>
<div style="position:absolute;left:278px;top:374px;width:9px;height:1px;background:#2a2a2a"></div>
<div style="position:absolute;left:282px;top:381px;width:1px;height:91px;background:#9a9a9a"></div>
<div style="position:absolute;left:282px;top:472px;width:23px;height:1px;background:#9a9a9a"></div>
<div style="position:absolute;left:276px;top:512px;width:13px;height:13px;box-sizing:border-box;border:1px solid #a8a8a8;border-radius:2px;background:#fff"></div>
<div style="position:absolute;left:278px;top:518px;width:9px;height:1px;background:#2a2a2a"></div>
<div style="position:absolute;left:282px;top:525px;width:1px;height:105px;background:#9a9a9a"></div>
<div style="position:absolute;left:282px;top:630px;width:23px;height:1px;background:#9a9a9a"></div>
<svg style="position:absolute;left:1177px;top:153px;" width="7" height="5" viewBox="0 0 7 5"><path d="M0 5H6.5L3.25 0.5Z" fill="#c8c8c8"/></svg>
<div style="position:absolute;left:1176px;top:168px;width:8px;height:563px;background:#d4d4d4;border-radius:4px"></div>
<div style="position:absolute;left:1176px;top:168px;width:8px;height:482px;background:#999;border-radius:4px"></div>
<svg style="position:absolute;left:1177px;top:741px;" width="7" height="5" viewBox="0 0 7 5"><path d="M0 0H6.5L3.25 4.5Z" fill="#555"/></svg>
<svg style="position:absolute;left:282px;top:758px;" width="5" height="7" viewBox="0 0 5 7"><path d="M5 0V6.5L0.5 3.25Z" fill="#c8c8c8"/></svg>
<div style="position:absolute;left:296px;top:757px;width:854px;height:8px;background:#d4d4d4;border-radius:4px"></div>
<div style="position:absolute;left:296px;top:757px;width:691px;height:8px;background:#999;border-radius:4px"></div>
<svg style="position:absolute;left:1160px;top:758px;" width="5" height="7" viewBox="0 0 5 7"><path d="M0 0V6.5L4.5 3.25Z" fill="#555"/></svg></body></html>
